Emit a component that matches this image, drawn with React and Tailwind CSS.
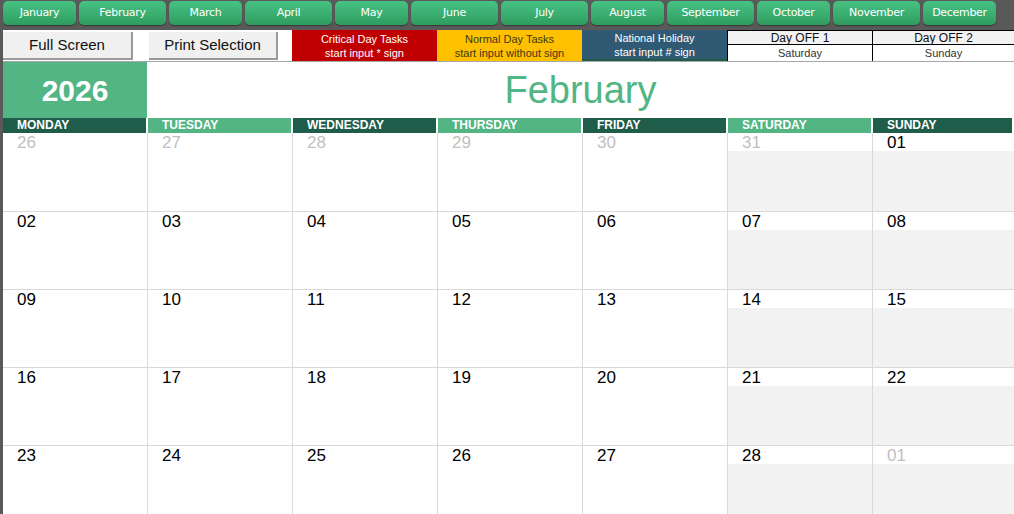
import React from 'react';

const months = [
  ['January', 73], ['February', 87], ['March', 73], ['April', 87],
  ['May', 73], ['June', 87], ['July', 87], ['August', 73],
  ['September', 87], ['October', 73], ['November', 87], ['December', 73],
];

const days = ['MONDAY', 'TUESDAY', 'WEDNESDAY', 'THURSDAY', 'FRIDAY', 'SATURDAY', 'SUNDAY'];

const weeks = [
  [['26', 1], ['27', 1], ['28', 1], ['29', 1], ['30', 1], ['31', 1], ['01', 0]],
  [['02', 0], ['03', 0], ['04', 0], ['05', 0], ['06', 0], ['07', 0], ['08', 0]],
  [['09', 0], ['10', 0], ['11', 0], ['12', 0], ['13', 0], ['14', 0], ['15', 0]],
  [['16', 0], ['17', 0], ['18', 0], ['19', 0], ['20', 0], ['21', 0], ['22', 0]],
  [['23', 0], ['24', 0], ['25', 0], ['26', 0], ['27', 0], ['28', 0], ['01', 1]],
];

const cols = 'grid grid-cols-[145px_145px_145px_145px_145px_145px_1fr]';

export default function App() {
  return (
    <div className="w-[1014px] h-[514px] overflow-hidden bg-[#595959] flex flex-col font-['Liberation_Sans',Arial,sans-serif]">
      {/* month tabs */}
      <div className="h-[30px] flex gap-[3px] pl-[3px] pt-[1px] shrink-0">
        {months.map(([m, w]) => (
          <div
            key={m}
            style={{ width: w }}
            className="h-[24px] pt-[1px] rounded-[5px] bg-gradient-to-b from-[#47c284] to-[#2f9d5f] shadow-[0_1px_1px_rgba(0,0,0,0.4)] flex items-center justify-center text-white text-[11px] font-['DejaVu_Sans',sans-serif] tracking-[-0.3px]"
          >
            {m}
          </div>
        ))}
      </div>

      <div className="flex-1 ml-[3px] bg-white flex flex-col">
        {/* toolbar + legend */}
        <div className="h-[32px] flex shrink-0 border-b border-[#a6a6a6]">
          <div className="w-[130px] h-[28px] mt-[2px] bg-[#f0f0f0] border-r-2 border-b-2 border-[#9a9a9a] flex items-center justify-center text-[15px] text-[#111]">
            Full Screen
          </div>
          <div className="w-[16px]" />
          <div className="w-[129px] h-[28px] mt-[2px] bg-[#f0f0f0] border-r-2 border-b-2 border-[#9a9a9a] flex items-center justify-center text-[15px] text-[#111]">
            Print Selection
          </div>
          <div className="w-[14px]" />
          <div className="w-[145px] bg-[#c00000] text-white text-[11px] leading-[14px] flex flex-col items-center justify-center">
            <span>Critical Day Tasks</span>
            <span>start input * sign</span>
          </div>
          <div className="w-[145px] bg-[#ffc000] text-[#3a3a10] text-[11px] leading-[14px] flex flex-col items-center justify-center">
            <span>Normal Day Tasks</span>
            <span>start input without sign</span>
          </div>
          <div className="w-[145px] bg-[#305a74] text-white text-[11px] leading-[14px] flex flex-col items-center justify-center border-b-2 border-[#1f5c4a]">
            <span>National Holiday</span>
            <span>start input # sign</span>
          </div>
          <div className="w-[145px] flex flex-col border-l border-t border-black">
            <div className="h-[14px] bg-[#f2f2f2] border-b border-black flex items-center justify-center text-[12px] text-[#111]">Day OFF 1</div>
            <div className="flex-1 flex items-center justify-center text-[11px] text-[#333]">Saturday</div>
          </div>
          <div className="flex-1 flex flex-col border-l border-t border-black">
            <div className="h-[14px] bg-[#f2f2f2] border-b border-black flex items-center justify-center text-[12px] text-[#111]">Day OFF 2</div>
            <div className="flex-1 flex items-center justify-center text-[11px] text-[#333]">Sunday</div>
          </div>
        </div>

        {/* year + month title */}
        <div className="h-[56px] flex shrink-0">
          <div className="w-[144px] bg-[#52b583] flex items-center justify-center text-white text-[30px] font-bold">
            2026
          </div>
          <div className="flex-1 flex items-center justify-center text-[#52b583] text-[38px]">
            February
          </div>
        </div>

        {/* weekday headers */}
        <div className={`${cols} h-[15px] shrink-0`}>
          {days.map((d, i) => (
            <div
              key={d}
              className={`mr-[2px] pl-[14px] text-white text-[12px] font-bold leading-[15px] ${i % 2 === 0 ? 'bg-[#1f5c4a]' : 'bg-[#52b583]'}`}
            >
              {d}
            </div>
          ))}
        </div>

        {/* weeks */}
        <div className="flex-1 flex flex-col">
          {weeks.map((week, r) => (
            <div key={r} className={`${cols} ${r === 4 ? 'flex-1' : 'h-[78px]'} ${r > 0 ? 'border-t border-[#d9d9d9]' : ''}`}>
              {week.map(([n, faded], c) => (
                <div key={c} className={`flex flex-col ${c < 6 ? 'border-r border-[#d9d9d9]' : ''}`}>
                  <div className={`h-[18px] pl-[14px] pt-[1px] text-[17px] leading-[18px] ${faded ? 'text-[#bfbfbf]' : 'text-black'}`}>
                    {n}
                  </div>
                  <div className={`flex-1 ${c >= 5 ? 'bg-[#f2f2f2]' : ''}`} />
                </div>
              ))}
            </div>
          ))}
        </div>
      </div>
    </div>
  );
}
